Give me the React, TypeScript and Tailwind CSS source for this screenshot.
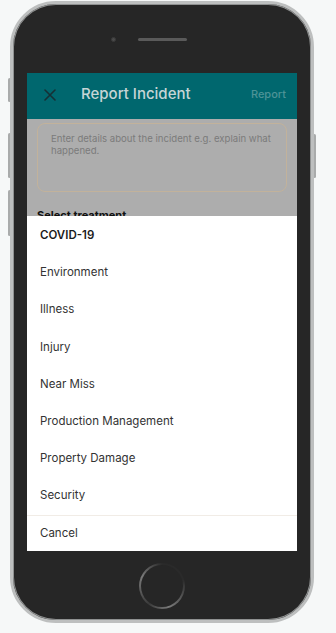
import React from "react";

const TYPES = [
  "COVID-19",
  "Environment",
  "Illness",
  "Injury",
  "Near Miss",
  "Production Management",
  "Property Damage",
  "Security",
];

function SideButton({ className }: { className: string }) {
  return <div className={`absolute w-[3px] rounded-sm bg-[#a9abab] ${className}`} />;
}

export default function App() {
  return (
    <div
      className="w-[336px] h-[633px] bg-[#f6f8f8] overflow-hidden"
      style={{ fontFamily: "Inter, 'Noto Sans', sans-serif" }}
    >
      <div className="relative ml-[10px] mt-[1px] w-[304px] h-[622px]">
        {/* side buttons */}
        <SideButton className="-left-[2px] top-[77px] h-[24px]" />
        <SideButton className="-left-[2px] top-[132px] h-[45px]" />
        <SideButton className="-left-[2px] top-[189px] h-[46px]" />
        <SideButton className="-right-[2px] top-[133px] h-[44px]" />

        <div className="relative h-full w-full rounded-[46px] border-[3px] border-[#bdbfbf] bg-[#262626] flex flex-col shadow-[inset_0_0_0_1px_#8f9191]">
          {/* top: camera + speaker */}
          <div className="h-[69px] flex items-center justify-center gap-[22px] pt-[1px]">
            <div className="w-[5px] h-[5px] rounded-full bg-[#4a4a4a] border border-[#3a3a3a]" />
            <div className="w-[49px] h-[3px] rounded-full bg-[#5a5a5a]" />
            <div className="w-[5px] h-[5px]" />
          </div>

          {/* screen */}
          <div className="mx-auto w-[270px] h-[478px] flex flex-col overflow-hidden bg-[#adadad]">
            <div className="h-[46px] shrink-0 bg-[#00676e] flex items-center pl-[17px] pr-[11px] pb-[3px]">
              <svg width="12" height="12" viewBox="0 0 12 12" className="shrink-0">
                <path d="M1 1L11 11M11 1L1 11" stroke="#163035" strokeWidth="1.6" strokeLinecap="round" />
              </svg>
              <span className="ml-[25px] text-[15px] font-medium text-[#c6d5d6]">Report Incident</span>
              <span className="ml-auto text-[11px] font-medium text-[#4d9397]">Report</span>
            </div>
            <div className="px-[10px] pt-[4px]">
              <div className="h-[69px] rounded-[8px] border border-[#c2b29b] pl-[13px] pr-[6px] pt-[9px] text-[9.6px] leading-[12px] text-[#7b7b7b]">
                Enter details about the incident e.g. explain what happened.
              </div>
              <div className="mt-[17px] text-[11px] font-bold text-[#111] leading-[12px]">Select treatment</div>
            </div>
          </div>
          {/* action sheet lies over the dimmed screen */}
          <div className="absolute left-[14px] top-[212px] w-[270px] h-[335px] bg-white flex flex-col">
            <div className="pt-[1px]">
              {TYPES.map((t, i) => (
                <div
                  key={t}
                  className={`h-[37.2px] flex items-center px-[13px] text-[11.5px] ${
                    i === 0 ? "font-semibold text-[#1b1b1b]" : "text-[#333]"
                  }`}
                >
                  {t}
                </div>
              ))}
            </div>
            <div className="h-px bg-[#f1ece6]" />
            <div className="flex-1 flex items-center px-[13px] text-[11.5px] text-[#333]">Cancel</div>
          </div>

          {/* bottom: home button */}
          <div className="flex-1 flex items-center justify-center">
            <div className="w-[46px] h-[46px] rounded-full p-[2px] bg-[conic-gradient(from_0deg,#2a2a2a,#2a2a2a_20%,#7a7a7a_45%,#3a3a3a_60%,#7a7a7a_82%,#2a2a2a)]">
              <div className="w-full h-full rounded-full bg-[#262626]" />
            </div>
          </div>
        </div>
      </div>
    </div>
  );
}
